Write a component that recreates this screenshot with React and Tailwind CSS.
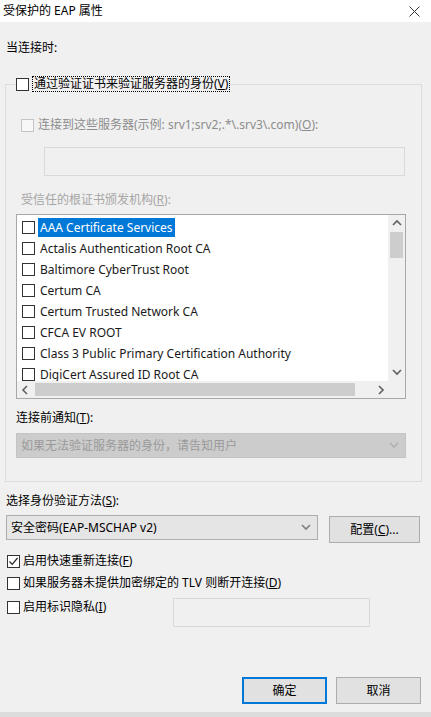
import React from 'react';

const certs = [
  'AAA Certificate Services',
  'Actalis Authentication Root CA',
  'Baltimore CyberTrust Root',
  'Certum CA',
  'Certum Trusted Network CA',
  'CFCA EV ROOT',
  'Class 3 Public Primary Certification Authority',
  'DigiCert Assured ID Root CA',
];

function Box({ checked, disabled }) {
  return (
    <span
      className={
        disabled
          ? 'w-[13px] h-[13px] shrink-0 border border-[#c4c4c4] bg-[#f7f7f7] flex items-center justify-center'
          : 'w-[13px] h-[13px] shrink-0 border border-[#333333] bg-white flex items-center justify-center'
      }
    >
      {checked && (
        <svg width="11" height="11" viewBox="0 0 11 11">
          <path d="M1.5 5.5 L4.2 8.3 L9.5 2" fill="none" stroke="#222" strokeWidth="1.2" />
        </svg>
      )}
    </span>
  );
}

function Chevron({ dir = 'down', color = '#606060' }) {
  const d = {
    down: 'M1 2 L5 6 L9 2',
    up: 'M1 6 L5 2 L9 6',
    left: 'M6 1 L2 5 L6 9',
    right: 'M4 1 L8 5 L4 9',
  }[dir];
  return (
    <svg width="10" height="10" viewBox="0 0 10 10">
      <path d={d} fill="none" stroke={color} strokeWidth="1.6" />
    </svg>
  );
}

export default function App() {
  return (
    <div className="w-[431px] h-[717px] bg-[#f0f0f0] overflow-hidden flex flex-col text-[12px] leading-[16px] text-black font-['Noto_Sans','Noto_Sans_CJK_SC',sans-serif]">
      {/* Title bar */}
      <div className="h-[22px] bg-white flex items-center justify-between pl-[3px] pr-[11px] shrink-0">
        <span className="text-[12px]">受保护的 EAP 属性</span>
        <svg width="11" height="11" viewBox="0 0 11 11">
          <path d="M0.5 0.5 L10.5 10.5 M10.5 0.5 L0.5 10.5" stroke="#333" strokeWidth="1" />
        </svg>
      </div>

      <div className="pl-[6px] mt-[18px]">当连接时:</div>

      <fieldset className="ml-[5px] mt-[20px] w-[417px] border border-[#dcdcdc] pb-[23px]">
        <legend className="ml-[10px] flex items-center h-[16px]">
          <Box />
          <span className="ml-[3px] px-[1px] h-[16px] flex items-center border border-dotted border-black">
            通过验证证书来验证服务器的身份(<u>V</u>)
          </span>
        </legend>

        <div className="mt-[25px] ml-[15px] flex items-center gap-[4px] text-[#8c8c8c]">
          <Box disabled />
          <span>
            连接到这些服务器(示例: srv1;srv2;.*\.srv3\.com)(<u>O</u>):
          </span>
        </div>

        <div className="mt-[14px] ml-[38px] w-[361px] h-[29px] border border-[#d9d9d9] bg-[#f0f0f0]" />

        <div className="mt-[16px] ml-[15px] text-[#a6a6a6]">
          受信任的根证书颁发机构(<u>R</u>):
        </div>

        {/* Certificate list */}
        <div className="mt-[6px] ml-[10px] w-[390px] h-[185px] border border-[#a8a8a8] bg-white flex flex-col">
          <div className="flex h-[166px]">
            <div className="w-[371px] pt-[2px] overflow-hidden">
              {certs.map((c, i) => (
                <div key={c} className="h-[21px] flex items-center pl-[5px]">
                  <Box />
                  <span
                    className={
                      i === 0
                        ? 'ml-[3px] px-[2px] h-[19px] flex items-center bg-[#0078d7] text-white whitespace-nowrap'
                        : 'ml-[3px] px-[2px] whitespace-nowrap text-[#1a1a1a]'
                    }
                  >
                    {c}
                  </span>
                </div>
              ))}
            </div>
            <div className="w-[17px] bg-[#f0f0f0] flex flex-col">
              <div className="h-[17px] flex items-center justify-center">
                <Chevron dir="up" />
              </div>
              <div className="mx-[2px] h-[26px] bg-[#cdcdcd]" />
              <div className="flex-1" />
              <div className="h-[17px] flex items-center justify-center">
                <Chevron dir="down" />
              </div>
            </div>
          </div>
          <div className="flex h-[17px] bg-[#f0f0f0]">
            <div className="w-[17px] flex items-center justify-center">
              <Chevron dir="left" />
            </div>
            <div className="ml-[1px] my-[2px] w-[320px] bg-[#cdcdcd]" />
            <div className="w-[16px]" />
            <div className="w-[17px] flex items-center justify-center">
              <Chevron dir="right" />
            </div>
            <div className="w-[17px] bg-[#f0f0f0]" />
          </div>
        </div>

        <div className="mt-[11px] ml-[10px]">
          连接前通知(<u>T</u>):
        </div>

        <div className="mt-[7px] ml-[10px] w-[390px] h-[25px] border border-[#c4c4c4] bg-[#cccccc] flex items-center justify-between pl-[4px] pr-[6px] text-[#9a9a9a]">
          <span>如果无法验证服务器的身份，请告知用户</span>
          <Chevron dir="down" color="#b0b0b0" />
        </div>
      </fieldset>

      <div className="pl-[6px] mt-[11px]">
        选择身份验证方法(<u>S</u>):
      </div>

      <div className="mt-[6px] ml-[6px] flex items-start">
        <div className="w-[312px] h-[25px] border border-[#adadad] bg-[#e5e5e5] flex items-center justify-between pl-[4px] pr-[6px]">
          <span>安全密码(EAP-MSCHAP v2)</span>
          <Chevron dir="down" color="#808080" />
        </div>
        <div className="ml-[11px] mt-[1px] w-[91px] h-[27px] border border-[#adadad] bg-[#e1e1e1] flex items-center justify-center">
          配置(<u>C</u>)...
        </div>
      </div>

      <div className="mt-[10px] ml-[7px] flex items-center gap-[3px]">
        <Box checked />
        <span>
          启用快速重新连接(<u>F</u>)
        </span>
      </div>

      <div className="mt-[6px] ml-[7px] flex items-center gap-[3px]">
        <Box />
        <span>
          如果服务器未提供加密绑定的 TLV 则断开连接(<u>D</u>)
        </span>
      </div>

      <div className="mt-[7px] ml-[7px] flex items-start">
        <div className="mt-[1px] flex items-center gap-[3px] w-[166px]">
          <Box />
          <span>
            启用标识隐私(<u>I</u>)
          </span>
        </div>
        <div className="w-[197px] h-[29px] border border-[#d9d9d9] bg-[#f0f0f0]" />
      </div>

      <div className="flex-1" />

      <div className="flex justify-end gap-[9px] pr-[10px] mb-[8px]">
        <div className="w-[85px] h-[27px] border-2 border-[#0078d7] bg-[#e1e1e1] flex items-center justify-center">
          确定
        </div>
        <div className="w-[85px] h-[27px] border border-[#adadad] bg-[#e1e1e1] flex items-center justify-center">
          取消
        </div>
      </div>
      <div className="h-[5px] bg-[#dcdcdc]" />
    </div>
  );
}
